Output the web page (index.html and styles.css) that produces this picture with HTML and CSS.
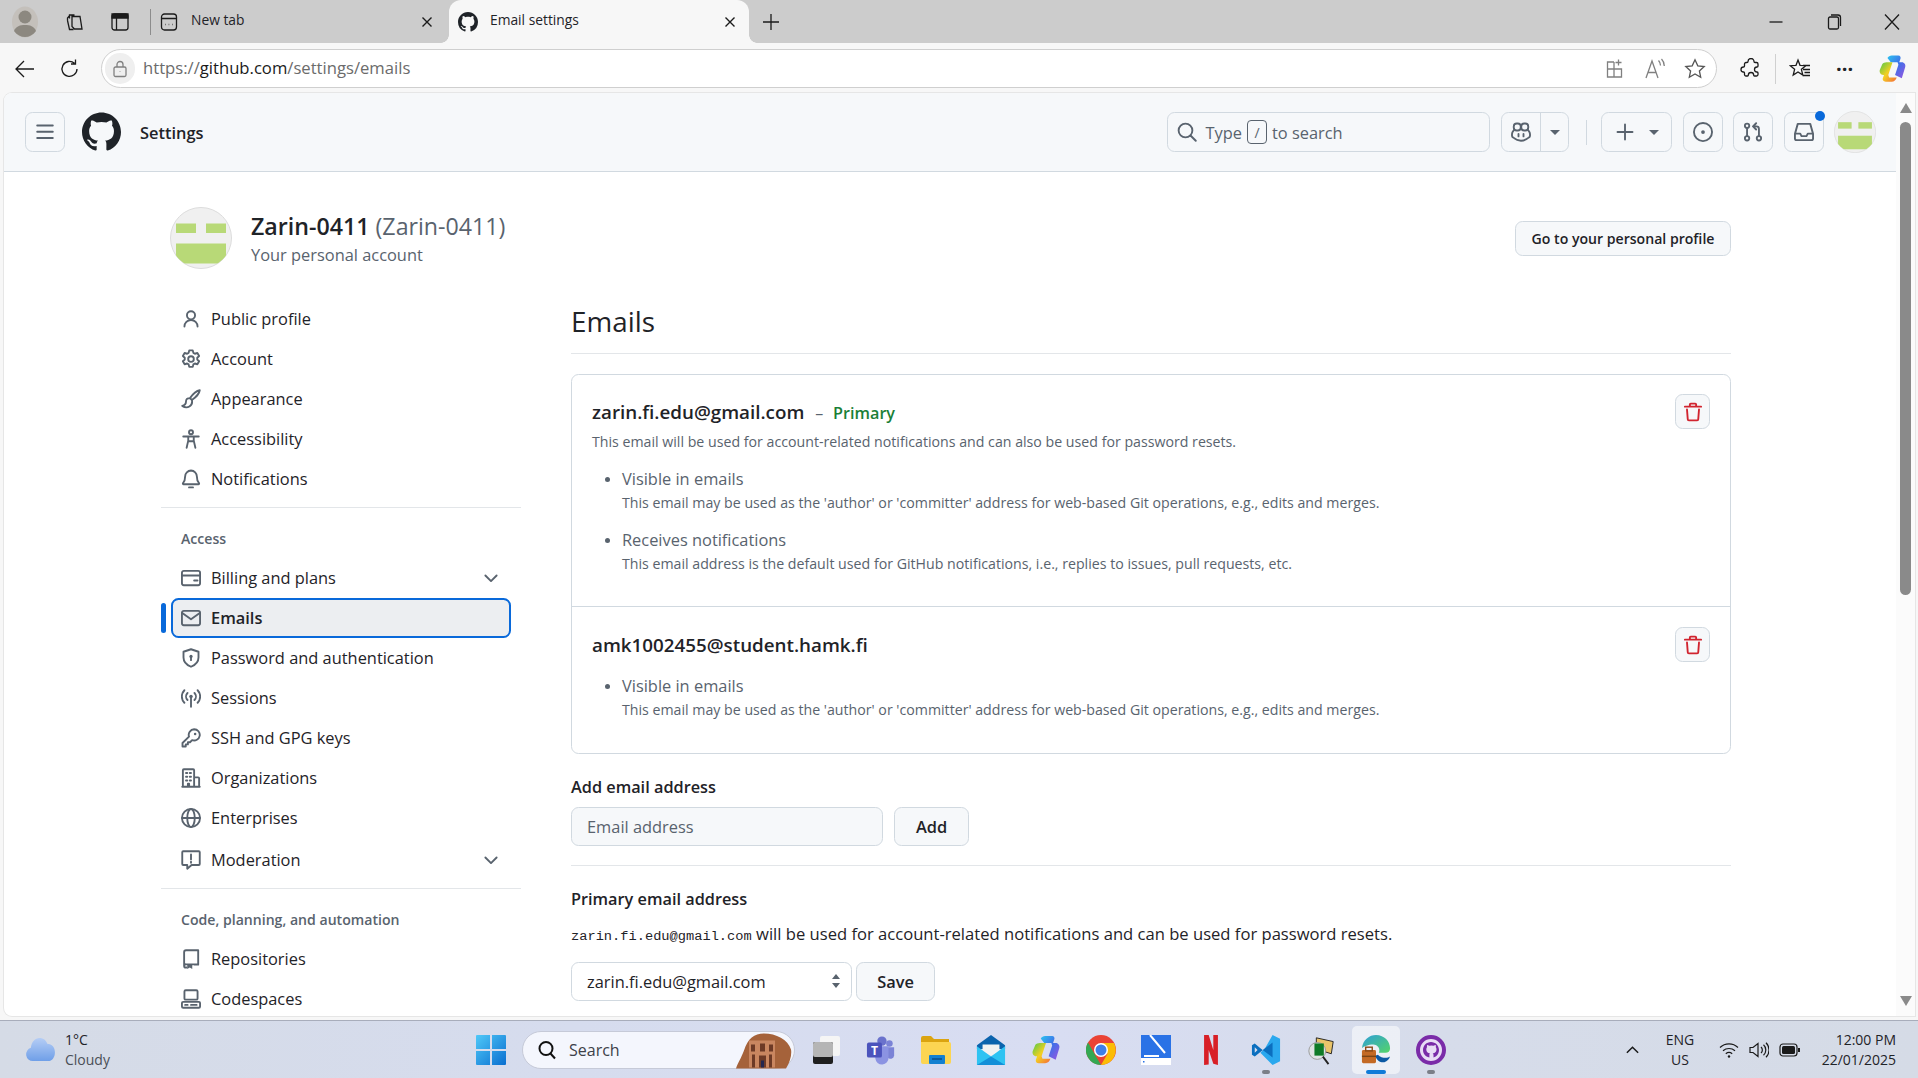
FILE: index.html
```html
<!DOCTYPE html>
<html lang="en">
<head>
  <meta charset="UTF-8">
  <meta name="viewport" content="width=device-width, initial-scale=1.0">
  <title>Email settings</title>
  <link rel="stylesheet" href="styles.css">
</head>
<body>
<svg class="sprite" width="0" height="0">
  <symbol id="i-github" viewBox="0 0 16 16"><path class="solid" d="M8 0c4.42 0 8 3.58 8 8a8.013 8.013 0 0 1-5.45 7.59c-.4.08-.55-.17-.55-.38 0-.27.01-1.13.01-2.2 0-.75-.25-1.23-.54-1.48 1.78-.2 3.65-.88 3.65-3.95 0-.88-.31-1.59-.82-2.15.08-.2.36-1.02-.08-2.12 0 0-.67-.22-2.2.82-.64-.18-1.32-.27-2-.27-.68 0-1.36.09-2 .27-1.53-1.03-2.2-.82-2.2-.82-.44 1.1-.16 1.92-.08 2.12-.51.56-.82 1.28-.82 2.15 0 3.06 1.86 3.75 3.64 3.95-.23.2-.44.55-.51 1.07-.46.21-1.61.55-2.33-.66-.15-.24-.6-.83-1.23-.82-.67.01-.27.38.01.53.34.19.73.9.82 1.13.16.45.68 1.31 2.69.94 0 .67.01 1.3.01 1.49 0 .21-.15.45-.55.38A7.995 7.995 0 0 1 0 8c0-4.42 3.58-8 8-8Z"/></symbol>
  <symbol id="i-bars" viewBox="0 0 16 16"><path d="M1.75 2.75h12.5M1.75 7.75h12.5M1.75 12.75h12.5"/></symbol>
  <symbol id="i-person" viewBox="0 0 16 16"><circle cx="8" cy="5" r="3.25"/><path d="M2.75 14a5.25 5.25 0 0 1 10.5 0"/></symbol>
  <symbol id="i-gear" viewBox="0 0 16 16"><circle cx="8" cy="8" r="2.25"/><path d="M6.6 1.1h2.8l.5 2 1.2.7 2-.6 1.4 2.4-1.5 1.4v1.4l1.5 1.4-1.4 2.4-2-.6-1.2.7-.5 2H6.6l-.5-2-1.2-.7-2 .6-1.4-2.4 1.5-1.4V7L1.5 5.6l1.4-2.4 2 .6 1.2-.7z"/></symbol>
  <symbol id="i-brush" viewBox="0 0 16 16"><path d="M15 1c-2 .3-5.5 3-7.8 6.3l1.5 1.5C12 6.5 14.7 3 15 1ZM7.2 7.3C5 7.3 4 8.5 4 10c0 1.700-1 3-3 3.500 1.700 1.200 4 1.500 5.700.5 1.700-1 2.500-3 2-5.200"/></symbol>
  <symbol id="i-access" viewBox="0 0 16 16"><circle cx="8" cy="2.6" r="1.6"/><path d="M1.800 6h12.400M5.800 6v3.300L4.500 15M10.200 6v3.300l1.300 5.700M5.800 9.800h4.400"/></symbol>
  <symbol id="i-bell" viewBox="0 0 16 16"><path d="M8 1.2A4.800 4.800 0 0 0 3.300 6c0 2.600-.6 4.200-1.700 5.300-.3.4 0 .9.400.9h12c.4 0 .7-.5.400-.9C13.300 10.200 12.700 8.600 12.700 6A4.800 4.800 0 0 0 8 1.200ZM6.400 14.700h3.200"/></symbol>
  <symbol id="i-card" viewBox="0 0 16 16"><rect x=".75" y="2.25" width="14.5" height="11.5" rx="1.5"/><path d="M1 6h14M10.500 10h2.700"/></symbol>
  <symbol id="i-mail" viewBox="0 0 16 16"><rect x=".75" y="2.25" width="14.5" height="11.5" rx="1.5"/><path d="M1 4l7 5 7-5"/></symbol>
  <symbol id="i-shield" viewBox="0 0 16 16"><path d="M8 1l6 2v4.500c0 3.500-2.500 6-6 7.500-3.500-1.500-6-4-6-7.500V3Z"/><circle class="solid" cx="8" cy="6.7" r="1.3"/><path d="M8 7v2.700"/></symbol>
  <symbol id="i-broadcast" viewBox="0 0 16 16"><circle class="solid" cx="8" cy="6.8" r="1.4"/><path d="M8 8v7M5.200 4a4 4 0 0 0 0 5.600M10.800 4a4 4 0 0 1 0 5.600M2.700 1.800a7.200 7.200 0 0 0 0 10M13.300 1.800a7.200 7.200 0 0 1 0 10"/></symbol>
  <symbol id="i-key" viewBox="0 0 16 16"><path d="M10.500 1a4.500 4.500 0 1 1-1.600 8.700L7.200 11.400H5.500v1.700H3.800v1.700H1.200v-2.800l5.200-5.100A4.500 4.500 0 0 1 10.500 1Z"/><circle class="solid" cx="11.3" cy="4.7" r="1"/></symbol>
  <symbol id="i-org" viewBox="0 0 16 16"><path d="M1 15h14M1.500 15V1.750c0-.5.300-.75.750-.75h7.500c.5 0 .75.300.75.750V15M10.500 7.500h3.250c.5 0 .75.300.75.750V15M4 4h1M7 4h1M4 7h1M7 7h1M4 10h1M7 10h1M5.500 15v-2.500h1V15"/></symbol>
  <symbol id="i-globe" viewBox="0 0 16 16"><circle cx="8" cy="8" r="7.25"/><ellipse cx="8" cy="8" rx="3" ry="7.25"/><path d="M1 8h14"/></symbol>
  <symbol id="i-report" viewBox="0 0 16 16"><path d="M1.750 1h12.500c.5 0 .75.300.75.750v9.500c0 .5-.300.750-.75.750H8.500L5 15v-3H1.750c-.5 0-.75-.300-.75-.75v-9.500c0-.5.300-.75.750-.75Z"/><path d="M8 3.500v4M8 9.300v.9"/></symbol>
  <symbol id="i-repo" viewBox="0 0 16 16"><path d="M2.500 13.500V2.500A1.500 1.500 0 0 1 4 1h9.750v11.500H11M2.500 13.500A1.500 1.500 0 0 1 4 12.250h9.750M2.500 13.500c0 .8.600 1.300 1.300 1.300H4.500"/><path class="solid" d="M5 12h4v4l-2-1.300L5 16Z"/></symbol>
  <symbol id="i-codespaces" viewBox="0 0 16 16"><rect x="2.75" y="1" width="10.5" height="7.5" rx="1"/><rect x=".75" y="10.25" width="14.5" height="4.75" rx="1"/><path d="M3.300 12.700h2M8 12.700h4.500"/></symbol>
  <symbol id="i-trash" viewBox="0 0 16 16"><path d="M1.500 3.700h13M5.500 3.700V2c0-.4.300-.7.700-.7h3.600c.4 0 .7.300.7.700v1.700M3.200 6l.6 7.800c0 .5.500.9.900.9h6.600c.4 0 .9-.4.900-.9l.6-7.800"/></symbol>
  <symbol id="i-chevron" viewBox="0 0 16 16"><path d="M3.500 6L8 10.500 12.500 6"/></symbol>
  <symbol id="i-search" viewBox="0 0 16 16"><circle cx="6.8" cy="6.8" r="5.5"/><path d="M10.800 10.800L15 15"/></symbol>
  <symbol id="i-copilot" viewBox="0 0 16 16"><rect x="2.2" y="1.2" width="5.6" height="5.6" rx="2.4"/><rect x="8.2" y="1.2" width="5.6" height="5.6" rx="2.4"/><path d="M2.300 6.500C1.500 7.500.8 8.500.8 9.500v1.500c0 .6.300 1 .8 1.300C3.500 13.800 6 15 8 15s4.500-1.200 6.400-2.700c.5-.3.800-.7.800-1.300V9.500c0-1-.7-2-1.500-3M6 9.500v2M10 9.500v2"/></symbol>
  <symbol id="i-plus" viewBox="0 0 16 16"><path d="M8 2v12M2 8h12"/></symbol>
  <symbol id="i-issue" viewBox="0 0 16 16"><circle cx="8" cy="8" r="7.25"/><circle class="solid" cx="8" cy="8" r="1.5"/></symbol>
  <symbol id="i-pr" viewBox="0 0 16 16"><circle cx="3.25" cy="3" r="1.75"/><circle cx="3.25" cy="13" r="1.75"/><circle cx="12.75" cy="13" r="1.75"/><path d="M3.250 4.750v6.500M12.750 11.250V5.500a2 2 0 0 0-2-2H8.500M10.500 1L8 3.500 10.500 6"/></symbol>
  <symbol id="i-inbox" viewBox="0 0 16 16"><path d="M3 1.500h10l2.250 8v3.700c0 .7-.6 1.300-1.300 1.300H2.050c-.7 0-1.300-.6-1.300-1.300V9.500ZM1 9.250h4l1 2h4l1-2h4"/></symbol>
</svg>

<div class="window">
  <div class="tabstrip">
    <svg class="profile" viewBox="0 0 28 32"><ellipse cx="14" cy="16" rx="13" ry="15.5" fill="#c4c0bb"/><circle cx="14" cy="11" r="6.5" fill="#8c8880"/><path d="M3 25c2-5 6-6 11-6s9 1 11 6c-3 4-7 6-11 6s-8-2-11-6Z" fill="#8c8880"/></svg>
    <svg class="chrome-ic collections" viewBox="0 0 20 20"><path d="M7 4.500h8l2 12.500h-7.500L7 14.500ZM4.500 6.500V3h5M2.500 8.500V6l1.800-2M2.500 8.500l2 9h4"/></svg>
    <svg class="chrome-ic vtabs" viewBox="0 0 20 20"><rect x="2" y="2" width="16" height="16" rx="2.5"/><path class="filled" d="M2 2h16v4H2Z"/><path d="M6.500 6v12"/></svg>
    <div class="tab-sep"></div>
    <div class="tab">
      <svg class="chrome-ic" viewBox="0 0 20 20"><rect x="2.5" y="2" width="15" height="16" rx="3"/><path d="M2.500 6.500h15M6 12.500h.5M9.700 12.500h.5M13.500 12.500h.5"/></svg>
      <span class="tab-title">New tab</span>
      <svg class="tab-close" viewBox="0 0 12 12"><path d="M1.500 1.500l9 9M10.500 1.500l-9 9"/></svg>
    </div>
    <div class="tab tab-active">
      <svg class="tab-logo"><use href="#i-github"/></svg>
      <span class="tab-title">Email settings</span>
      <svg class="tab-close" viewBox="0 0 12 12"><path d="M1.500 1.500l9 9M10.500 1.500l-9 9"/></svg>
    </div>
    <svg class="chrome-ic new-tab" viewBox="0 0 20 20"><path d="M10 2v16M2 10h16"/></svg>
    <div class="win-controls">
      <svg class="chrome-ic" viewBox="0 0 20 20"><path d="M3.500 10h13"/></svg>
      <svg class="chrome-ic" viewBox="0 0 20 20"><rect x="4.5" y="5" width="10" height="12" rx="1.5"/><path d="M7 3h7c1.500 0 2.500 1 2.500 2.500V14"/></svg>
      <svg class="chrome-ic" viewBox="0 0 20 20"><path d="M3 2.500l14 15M17 2.500l-14 15"/></svg>
    </div>
  </div>

  <div class="toolbar">
    <svg class="chrome-ic back" viewBox="0 0 22 22"><path d="M20 11H2.500M10 3l-8 8 8 8"/></svg>
    <svg class="chrome-ic reload" viewBox="0 0 22 22"><path d="M18 11a7.500 7.500 0 1 1-2.500-5.700M16.500 1.500v4.500H12"/></svg>
    <div class="addressbar">
      <span class="lock"><svg class="chrome-ic grey" viewBox="0 0 18 18"><rect x="3" y="7" width="12" height="9.5" rx="1.5"/><path d="M6 7V4.500a3 3 0 0 1 6 0V7M9 11.500v.5"/></svg></span>
      <span class="url">https://<b>github.com</b>/settings/emails</span>
      <div class="address-actions">
        <svg class="chrome-ic grey" viewBox="0 0 22 22"><path d="M10 4H3.500v15h14v-8h-14M10 4v15M14.500 1.500v6M11.500 4.500h6"/></svg>
        <svg class="chrome-ic grey" viewBox="0 0 22 22"><path d="M2 20l6-17 6 17M4.200 14.500h7.600M14.500 2.500c1.500 1.500 2 2.700 2 5M17.500 1c2 2 2.800 4 2.800 7"/></svg>
        <svg class="chrome-ic grey-dark" viewBox="0 0 22 22"><path d="M11 1.800l2.800 6 6.400.7-4.800 4.400 1.300 6.400L11 16l-5.700 3.300 1.300-6.400-4.800-4.400 6.400-.7Z"/></svg>
      </div>
    </div>
    <div class="toolbar-right">
      <svg class="chrome-ic" viewBox="0 0 22 22"><path d="M8 3.500a3 3 0 0 1 6 0c0 .5.500 1 1 1h1.500c.8 0 1.500.7 1.500 1.500v2c0 .5-.5 1-1 1a2.500 2.500 0 0 0 0 5c.5 0 1 .5 1 1v1.500c0 .8-.7 1.500-1.500 1.500H14.500c-.5 0-.8-.4-.8-.8a2.700 2.700 0 0 0-5.400 0c0 .4-.3.800-.8.800H6c-.8 0-1.500-.7-1.500-1.500V15c0-.5-.5-1-1-1a2.500 2.500 0 0 1 0-5c.5 0 1-.5 1-1V6c0-.8.700-1.500 1.500-1.500h1c.5 0 1-.5 1-1Z"/></svg>
      <div class="toolbar-sep"></div>
      <svg class="chrome-ic" viewBox="0 0 22 22"><path d="M9 2l2 5.300 5.800.4-4.400 3.600 1.400 5.700L9 14l-4.800 3 1.400-5.700L1.200 7.700 7 7.300ZM14 11.500h7M15.500 14.500h5.500M13.500 17.500h7.500M14 7.500h7"/></svg>
      <span class="more">···</span>
      <svg class="copilot-logo" viewBox="0 0 32 34">
        <defs>
          <linearGradient id="cp-a" x1="0" y1="0" x2="1" y2="1"><stop offset="0" stop-color="#2bc4f0"/><stop offset=".5" stop-color="#3f6fe8"/><stop offset="1" stop-color="#9b55e0"/></linearGradient>
          <linearGradient id="cp-b" x1="0" y1="0" x2="1" y2="1"><stop offset="0" stop-color="#4fc94a"/><stop offset=".5" stop-color="#f3d021"/><stop offset="1" stop-color="#f56a3a"/></linearGradient>
        </defs>
        <path fill="url(#cp-a)" d="M10 4c1-2 3-3 5-3h8c2 0 3 2 2.500 3.500L24 9h3c3 0 5 3 4 6l-4 13-8-4 4-12-1-3h-8Z"/>
        <path fill="url(#cp-b)" d="M9 9h7l-5 15 1 3h9c-1 3-3 5-6 5H8c-3 0-4-2-3.500-4L6 24H5c-3 0-5-3-4-6l3-7c1-1 3-2 5-2Z"/>
      </svg>
    </div>
  </div>

  <div class="viewport">
    <div class="page">
      <div class="page-scroll">
        <header class="gh-header">
          <button class="gh-btn"><svg class="ic"><use href="#i-bars"/></svg></button>
          <svg class="gh-logo"><use href="#i-github"/></svg>
          <span class="gh-context">Settings</span>
          <div class="gh-actions">
            <div class="gh-search">
              <svg class="ic"><use href="#i-search"/></svg>
              <span>Type</span><kbd class="slash">/</kbd><span>to search</span>
            </div>
            <div class="gh-split">
              <span class="split-main"><svg class="ic"><use href="#i-copilot"/></svg></span>
              <span class="split-caret"><i class="caret"></i></span>
            </div>
            <div class="gh-divider"></div>
            <div class="gh-btn gh-create"><svg class="ic"><use href="#i-plus"/></svg><i class="caret"></i></div>
            <button class="gh-btn"><svg class="ic"><use href="#i-issue"/></svg></button>
            <button class="gh-btn"><svg class="ic"><use href="#i-pr"/></svg></button>
            <button class="gh-btn gh-inbox"><svg class="ic"><use href="#i-inbox"/></svg><i class="dot"></i></button>
            <svg class="avatar avatar-small" viewBox="0 0 62 62"><use href="#identicon"/></svg>
          </div>
        </header>

        <div class="container">
          <div class="account-head">
            <svg class="avatar" viewBox="0 0 62 62">
              <g id="identicon">
                <clipPath id="av-clip"><circle cx="31" cy="31" r="30.5"/></clipPath>
                <circle cx="31" cy="31" r="30.5" fill="#f0f0f0" stroke="#dcdcdc"/>
                <g clip-path="url(#av-clip)" fill="#b8d977">
                  <rect x="6" y="16.5" width="20" height="9.5"/>
                  <rect x="36" y="16.5" width="20" height="9.5"/>
                  <rect x="6" y="36.5" width="50" height="20"/>
                </g>
              </g>
            </svg>
            <div class="account-text">
              <h1 class="account-name">Zarin-0411 <span>(Zarin-0411)</span></h1>
              <p class="account-sub">Your personal account</p>
            </div>
            <button class="btn btn-small">Go to your personal profile</button>
          </div>

          <div class="columns">
            <nav class="sidenav">
              <ul>
                <li><a><svg class="ic"><use href="#i-person"/></svg>Public profile</a></li>
                <li><a><svg class="ic"><use href="#i-gear"/></svg>Account</a></li>
                <li><a><svg class="ic"><use href="#i-brush"/></svg>Appearance</a></li>
                <li><a><svg class="ic"><use href="#i-access"/></svg>Accessibility</a></li>
                <li><a><svg class="ic"><use href="#i-bell"/></svg>Notifications</a></li>
              </ul>
              <div class="nav-divider"></div>
              <h2 class="nav-heading">Access</h2>
              <ul>
                <li><a><svg class="ic"><use href="#i-card"/></svg>Billing and plans<svg class="ic chev"><use href="#i-chevron"/></svg></a></li>
                <li class="current"><a><svg class="ic"><use href="#i-mail"/></svg>Emails</a></li>
                <li><a><svg class="ic"><use href="#i-shield"/></svg>Password and authentication</a></li>
                <li><a><svg class="ic"><use href="#i-broadcast"/></svg>Sessions</a></li>
                <li><a><svg class="ic"><use href="#i-key"/></svg>SSH and GPG keys</a></li>
                <li><a><svg class="ic"><use href="#i-org"/></svg>Organizations</a></li>
                <li><a><svg class="ic"><use href="#i-globe"/></svg>Enterprises</a></li>
                <li class="moderation"><a><svg class="ic"><use href="#i-report"/></svg>Moderation<svg class="ic chev"><use href="#i-chevron"/></svg></a></li>
              </ul>
              <div class="nav-divider"></div>
              <h2 class="nav-heading">Code, planning, and automation</h2>
              <ul>
                <li><a><svg class="ic"><use href="#i-repo"/></svg>Repositories</a></li>
                <li><a><svg class="ic"><use href="#i-codespaces"/></svg>Codespaces</a></li>
              </ul>
            </nav>

            <main class="main">
              <h2 class="page-title">Emails</h2>
              <div class="email-box">
                <div class="email-item">
                  <div class="email-body">
                    <div class="email-name">zarin.fi.edu@gmail.com <span class="dash">–</span> <span class="primary">Primary</span></div>
                    <p class="note note-first">This email will be used for account-related notifications and can also be used for password resets.</p>
                    <ul class="email-props">
                      <li>Visible in emails<p class="note">This email may be used as the 'author' or 'committer' address for web-based Git operations, e.g., edits and merges.</p></li>
                      <li>Receives notifications<p class="note">This email address is the default used for GitHub notifications, i.e., replies to issues, pull requests, etc.</p></li>
                    </ul>
                  </div>
                  <button class="btn-trash"><svg class="ic"><use href="#i-trash"/></svg></button>
                </div>
                <div class="email-item email-second">
                  <div class="email-body">
                    <div class="email-name">amk1002455@student.hamk.fi</div>
                    <ul class="email-props">
                      <li>Visible in emails<p class="note">This email may be used as the 'author' or 'committer' address for web-based Git operations, e.g., edits and merges.</p></li>
                    </ul>
                  </div>
                  <button class="btn-trash"><svg class="ic"><use href="#i-trash"/></svg></button>
                </div>
              </div>

              <h3 class="form-label add-label">Add email address</h3>
              <div class="form-row">
                <input class="input" type="text" placeholder="Email address">
                <button class="btn btn-add">Add</button>
              </div>
              <div class="form-divider"></div>
              <h3 class="form-label primary-label">Primary email address</h3>
              <p class="primary-text"><code>zarin.fi.edu@gmail.com</code> will be used for account-related notifications and can be used for password resets.</p>
              <div class="form-row form-row-select">
                <div class="select-wrap">
                  <select class="select"><option>zarin.fi.edu@gmail.com</option></select>
                  <svg class="select-arrows" viewBox="0 0 10 16"><path d="M5 1l4 5H1ZM5 15l4-5H1Z"/></svg>
                </div>
                <button class="btn btn-save">Save</button>
              </div>
            </main>
          </div>
        </div>
      </div>
      <div class="scrollbar">
        <i class="arrow arrow-up"></i>
        <div class="thumb"></div>
        <i class="arrow arrow-down"></i>
      </div>
    </div>
  </div>

  <div class="taskbar">
    <div class="weather">
      <svg class="weather-ic" viewBox="0 0 32 26"><defs><linearGradient id="cloud" x1="0" y1="0" x2="0" y2="1"><stop offset="0" stop-color="#b5cdf5"/><stop offset="1" stop-color="#6f9fe8"/></linearGradient></defs><path fill="url(#cloud)" d="M8 25a7 7 0 0 1-2-13.700C6.500 5 10.500 1 15 1c4 0 7 2.500 8 6 5 0 8 4 8 9 0 5-3 9-7 9Z"/></svg>
      <div class="weather-text"><span>1°C</span><span class="weather-sub">Cloudy</span></div>
    </div>
    <div class="tb-cell">
      <svg class="tb-ic" viewBox="0 0 30 30"><defs><linearGradient id="win" x1="0" y1="0" x2="1" y2="1"><stop offset="0" stop-color="#4fc8f8"/><stop offset="1" stop-color="#0a6fd0"/></linearGradient></defs><path fill="url(#win)" d="M0 1q0-1 1-1h13v14H0ZM16 0h13q1 0 1 1v13H16ZM0 16h14v14H1q-1 0-1-1ZM16 16h14v13q0 1-1 1H16Z"/></svg>
    </div>
    <div class="tb-search">
      <svg class="tb-search-ic" viewBox="0 0 20 20"><circle cx="9" cy="8.5" r="6.5"/><path d="M13.500 13.500l4.500 5"/></svg>
      <span>Search</span>
      <svg class="petra" viewBox="0 0 58 36"><path fill="#a5623a" d="M2 36c2-6 5-10 8-18C14 6 20 1 30 1c12 0 24 6 27 16 1 5-1 13-5 19Z"/><rect x="15" y="8" width="26" height="27" fill="#c98660"/><path fill="#6d3a26" d="M17 12h4v7h-4ZM26 11h5v8h-5ZM35 12h4v7h-4ZM18 22h3v13h-3ZM25 23h7v12h-7ZM35 22h3v13h-3Z"/><rect x="27" y="28" width="3" height="7" fill="#23264f"/></svg>
    </div>
    <div class="tb-cell">
      <svg class="tb-ic" viewBox="0 0 30 30"><rect x="9" y="1" width="20" height="20" rx="2" fill="#f5f5f5"/><rect x="2" y="7" width="20" height="22" rx="2" fill="#1f1f1f"/><rect x="2" y="7" width="20" height="15" rx="2" fill="#b5b5b5"/></svg>
    </div>
    <div class="tb-cell">
      <svg class="tb-ic" viewBox="0 0 32 32"><circle cx="25" cy="9" r="3.5" fill="#7b83d6"/><path fill="#7b83d6" d="M21 13h9v9a4 4 0 0 1-7 2Z"/><circle cx="17" cy="6.5" r="5" fill="#6a72cc"/><path fill="#8b93e2" d="M9 12h15v12a7 7 0 0 1-14 1Z"/><rect x="1" y="8" width="16" height="16" rx="2" fill="#4b53bc"/><text class="teams-t" x="9" y="21" text-anchor="middle">T</text></svg>
    </div>
    <div class="tb-cell">
      <svg class="tb-ic" viewBox="0 0 30 30"><path fill="#dba410" d="M0 3q0-2 2-2h8l3 3h15v6H0Z"/><path fill="#fcd552" d="M0 7h28q2 0 2 2v18q0 2-2 2H2q-2 0-2-2Z"/><rect x="8" y="20" width="16" height="9" rx="1" fill="#1380d0"/><rect x="11" y="23" width="10" height="2" fill="#0b5a9c"/></svg>
    </div>
    <div class="tb-cell">
      <svg class="tb-ic" viewBox="0 0 30 32"><path fill="#0b63ad" d="M15 0L30 11v4H0v-4Z"/><path fill="#f2f2f2" d="M6 10h18v8l-9 4-9-4Z"/><path fill="#2fc3f2" d="M0 12l15 11 15-11v20H0Z"/><path fill="#138fd8" d="M0 32l15-9 15 9Z"/></svg>
    </div>
    <div class="tb-cell">
      <svg class="tb-ic" viewBox="0 0 32 34"><path fill="url(#cp-a)" d="M10 4c1-2 3-3 5-3h8c2 0 3 2 2.500 3.500L24 9h3c3 0 5 3 4 6l-4 13-8-4 4-12-1-3h-8Z"/><path fill="url(#cp-b)" d="M9 9h7l-5 15 1 3h9c-1 3-3 5-6 5H8c-3 0-4-2-3.500-4L6 24H5c-3 0-5-3-4-6l3-7c1-1 3-2 5-2Z"/></svg>
    </div>
    <div class="tb-cell">
      <svg class="tb-ic" viewBox="0 0 30 30"><circle cx="15" cy="15" r="15" fill="#ea4335"/><path fill="#34a853" d="M2 7.500l7.500 13L15 30a15 15 0 0 1-13-22.500Z"/><path fill="#fbbc05" d="M15 8h13a15 15 0 0 1-13 22l6.500-11.200Z"/><circle cx="15" cy="15" r="7" fill="#fff"/><circle cx="15" cy="15" r="5.5" fill="#3f7fe8"/></svg>
    </div>
    <div class="tb-cell">
      <svg class="tb-ic" viewBox="0 0 30 30"><rect width="30" height="30" fill="#2a72e6"/><path d="M9 0l15 18M3 21h15" stroke="#fff" stroke-width="2" fill="none"/><rect y="23" width="30" height="7" fill="#fff"/><rect x="2" y="26" width="1.5" height="1.5" fill="#2a72e6"/></svg>
    </div>
    <div class="tb-cell">
      <svg class="tb-ic tb-netflix" viewBox="0 0 12 26"><path fill="#d81f26" d="M0 0h4l4 13V0h4v26l-4-1-4-12v12.500L0 26Z"/></svg>
    </div>
    <div class="tb-cell tb-pinned">
      <svg class="tb-ic" viewBox="0 0 30 32"><path fill="#2aa8ee" d="M22 0l8 4v24l-8 4-13-13 5-5Z"/><path fill="#0b6fbf" d="M22 8v16L9 14 3 9 0 11v10l3 2 6-5 5-4ZM3 13l3 3-3 3Z"/></svg>
    </div>
    <div class="tb-cell">
      <svg class="tb-ic" viewBox="0 0 32 32"><path fill="#e9c46a" stroke="#222" stroke-width="1" d="M11 3l18 4-2 13-16-5Z"/><circle cx="12" cy="17" r="9" fill="#dfe4e4" stroke="#999"/><path fill="#0d7a26" d="M9 9h10v13H9Z"/><path stroke="#222" stroke-width="2" d="M18 23l6 8"/></svg>
    </div>
    <div class="tb-cell tb-active">
      <svg class="tb-ic" viewBox="0 0 30 32"><defs><linearGradient id="edge" x1="0" y1="0" x2="1" y2="1"><stop offset="0" stop-color="#2e9fd8"/><stop offset="1" stop-color="#54d468"/></linearGradient></defs><path fill="url(#edge)" d="M0 14C1 5 8 0 15 0c9 0 15 7 15 14 0 3-2 5-5 5h-7c2-4-1-9-6-9-5 0-10 2-12 4Z"/><path fill="#0c59a4" d="M14 22c2 5 6 8 10 7 3-1 5-3 6-6-3 2-9 2-13-2Z"/><rect y="16" width="15" height="14" rx="1.5" fill="#c46a24"/><rect x="4" y="13" width="7" height="4" fill="none" stroke="#8a4a18" stroke-width="1.5"/><rect y="22" width="15" height="1.5" fill="#7a4415"/></svg>
    </div>
    <div class="tb-cell tb-pinned">
      <svg class="tb-ic" viewBox="0 0 30 30"><circle cx="15" cy="15" r="13" fill="#e8dcf5" stroke="#7a2ba8" stroke-width="4"/><svg x="7" y="7" width="16" height="16" viewBox="0 0 16 16"><path fill="#7a2ba8" d="M8 0c4.420 0 8 3.580 8 8 0 3.500-2.300 6.500-5.500 7.600V13c0-1-.4-1.500-.8-1.800 2-.2 3.800-1 3.800-4 0-.9-.3-1.600-.8-2.200.1-.2.400-1-.1-2.100 0 0-.7-.2-2.200.8a7 7 0 0 0-4 0c-1.500-1-2.200-.8-2.200-.8-.5 1.100-.2 1.900-.1 2.100-.5.600-.8 1.300-.8 2.200 0 3 1.800 3.800 3.700 4-.3.300-.5.700-.6 1.300V15.600C2.300 14.500 0 11.500 0 8c0-4.420 3.580-8 8-8Z"/></svg></svg>
    </div>
    <div class="tray">
      <svg class="tray-ic tray-chev" viewBox="0 0 16 10"><path d="M2 8l6-6 6 6"/></svg>
      <div class="tray-lang"><span>ENG</span><span>US</span></div>
      <svg class="tray-ic" viewBox="0 0 20 18"><path d="M1 6.500a13 13 0 0 1 18 0M4 9.800a9 9 0 0 1 12 0M6.800 12.800a5 5 0 0 1 6.400 0"/><circle class="tray-dot" cx="10" cy="15.5" r="1.2"/></svg>
      <svg class="tray-ic" viewBox="0 0 20 18"><path d="M1 6.500v5h3l5 4V2.500l-5 4ZM12 6a4 4 0 0 1 0 6M14.500 3.800a7 7 0 0 1 0 10.400M17 1.800a10 10 0 0 1 0 14.400"/></svg>
      <svg class="tray-ic tray-batt" viewBox="0 0 22 16"><rect x="1" y="2" width="17" height="12" rx="3"/><rect class="tray-dot" x="3" y="4" width="13" height="8" rx="1.5"/><path class="tray-dot" d="M19 6h2v4h-2Z"/></svg>
      <div class="tray-clock"><span>12:00 PM</span><span>22/01/2025</span></div>
    </div>
  </div>
</div>
</body>
</html>
```

FILE: styles.css
```css
*{
  margin: 0;
  padding: 0;
  box-sizing: border-box;
}
html,body{
  width: 100%;
  height: 100%;
  overflow: hidden;
}
body{
  font-family: "Open Sans", "Noto Sans", sans-serif;
  font-size: 16.4px;
  color: #1f2328;
  background: #f7f7f7;
}
ul,li{
  list-style: none;
}
button,input,select{
  font-family: inherit;
  color: inherit;
}
.sprite{
  position: absolute;
}
.solid{
  fill: currentColor;
  stroke: none;
}
.window{
  display: flex;
  flex-direction: column;
  height: 1078px;
  width: 1918px;
}

/* browser tabs */
.tabstrip{
  display: flex;
  align-items: center;
  height: 43px;
  background: #ccc;
  flex: none;
}
.chrome-ic{
  width: 20px;
  height: 20px;
  fill: none;
  stroke: #1b1b1b;
  stroke-width: 1.3;
  flex: none;
}
.chrome-ic .filled{
  fill: #1b1b1b;
}
.chrome-ic.grey{
  stroke: #808080;
}
.chrome-ic.grey-dark{
  stroke: #555;
}
.profile{
  width: 28px;
  height: 32px;
  margin-left: 11px;
}
.collections{
  margin-left: 26px;
}
.vtabs{
  margin-left: 25px;
}
.tab-sep{
  width: 1px;
  height: 26px;
  background: #8c8c8c;
  margin-left: 20px;
}
.tab{
  display: flex;
  align-items: center;
  height: 43px;
  padding: 0 12px 0 8px;
  width: 294px;
}
.tab-title{
  font-size: 13.8px;
  margin-left: 12px;
  padding-bottom: 4px;
  flex: 1;
}
.tab-close{
  width: 12px;
  height: 12px;
  fill: none;
  stroke: #1b1b1b;
  stroke-width: 1.4;
}
.tab-active{
  position: relative;
  width: 300px;
  margin-left: 4px;
  padding: 0 13px 0 9px;
  background: #f7f7f7;
  border-radius: 12px 12px 0 0;
}
.tab-active::before,
.tab-active::after{
  content: "";
  position: absolute;
  bottom: 0;
  width: 8px;
  height: 8px;
}
.tab-active::before{
  left: -8px;
  background: radial-gradient(circle at 0 0, #ccc 7.5px, #f7f7f7 8px);
}
.tab-active::after{
  right: -8px;
  background: radial-gradient(circle at 100% 0, #ccc 7.5px, #f7f7f7 8px);
}
.tab-logo{
  width: 20px;
  height: 20px;
  color: #1f2328;
}
.new-tab{
  margin-left: 12px;
}
.win-controls{
  display: flex;
  margin-left: auto;
  margin-right: 16px;
  gap: 38px;
}

/* address bar row */
.toolbar{
  display: flex;
  align-items: center;
  height: 50px;
  background: #f7f7f7;
  flex: none;
  padding-top: 1px;
}
.back{
  width: 22px;
  height: 22px;
  margin-left: 14px;
}
.reload{
  width: 22px;
  height: 22px;
  margin-left: 23px;
}
.addressbar{
  display: flex;
  align-items: center;
  width: 1616px;
  height: 39px;
  margin-left: 20px;
  background: #fff;
  border: 1px solid #cfcfcf;
  border-radius: 20px;
}
.lock{
  display: flex;
  align-items: center;
  justify-content: center;
  width: 30px;
  height: 31px;
  margin-left: 3px;
  background: #efefef;
  border-radius: 15px;
}
.lock .chrome-ic{
  width: 18px;
  height: 18px;
}
.url{
  margin-left: 8px;
  padding-bottom: 2px;
  color: #6b6b6b;
  font-size: 16.65px;
}
.url b{
  color: #1a1a1a;
  font-weight: 400;
}
.address-actions{
  display: flex;
  margin-left: auto;
  margin-right: 10px;
  gap: 18px;
}
.address-actions .chrome-ic{
  width: 22px;
  height: 22px;
}
.toolbar-right{
  display: flex;
  align-items: center;
  margin-left: 23px;
}
.toolbar-right .chrome-ic{
  width: 22px;
  height: 22px;
}
.toolbar-sep{
  width: 1px;
  height: 30px;
  background: #d0d0d0;
  margin: 0 13px;
}
.more{
  margin-left: 25px;
  font-size: 20px;
  font-weight: 700;
  line-height: 1;
}
.copilot-logo{
  width: 27px;
  height: 30px;
  margin-left: 26px;
}

/* viewport */
.viewport{
  flex: 1;
  min-height: 0;
  padding: 0 3px 4px 4px;
  background: #f7f7f7;
  border-bottom: 1px solid #a8adbb;
}
.page{
  display: flex;
  height: 100%;
  background: #fff;
  border-radius: 8px 0 0 8px;
  overflow: hidden;
  box-shadow: 0 0 0 1px #e6e6e6;
}
.page-scroll{
  flex: 1;
  min-width: 0;
  overflow: hidden;
}
.scrollbar{
  display: flex;
  flex-direction: column;
  align-items: center;
  width: 19px;
  flex: none;
  background: #fbfbfb;
}
.arrow{
  width: 0;
  height: 0;
  border-left: 6px solid transparent;
  border-right: 6px solid transparent;
}
.arrow-up{
  border-bottom: 10px solid #8a8a8a;
  margin-top: 10px;
}
.arrow-down{
  border-top: 10px solid #8a8a8a;
  margin-top: auto;
  margin-bottom: 10px;
}
.thumb{
  width: 11px;
  height: 473px;
  margin-top: 9px;
  background: #8a8a8a;
  border-radius: 6px;
}

/* github header */
.gh-header{
  display: flex;
  align-items: center;
  height: 79px;
  padding: 0 20px 0 21px;
  background: #f6f8fa;
  border-bottom: 1px solid #d1d9e0;
}
.ic{
  width: 20px;
  height: 20px;
  flex: none;
  color: #59636e;
  fill: none;
  stroke: currentColor;
  stroke-width: 1.5;
  stroke-linecap: round;
  stroke-linejoin: round;
}
.gh-btn{
  display: flex;
  align-items: center;
  justify-content: center;
  width: 40px;
  height: 40px;
  background: transparent;
  border: 1px solid #d1d9e0;
  border-radius: 7.5px;
  flex: none;
}
.gh-logo{
  width: 39px;
  height: 40px;
  margin-left: 17px;
  color: #1f2328;
}
.gh-context{
  margin-left: 19px;
  font-weight: 600;
}
.gh-actions{
  display: flex;
  align-items: center;
  margin-left: auto;
  gap: 10.5px;
}
.gh-search{
  display: flex;
  align-items: center;
  width: 323px;
  height: 40px;
  margin-right: 1px;
  padding-left: 9px;
  border: 1px solid #d1d9e0;
  border-radius: 7.5px;
  color: #59636e;
}
.gh-search span:first-of-type{
  margin-left: 9px;
}
.slash{
  display: flex;
  align-items: center;
  justify-content: center;
  width: 20px;
  height: 24px;
  margin: 0 5px;
  font: inherit;
  font-size: 14px;
  border: 1px solid #59636e;
  border-radius: 4px;
}
.gh-split{
  display: flex;
  width: 68px;
  height: 40px;
  border: 1px solid #d1d9e0;
  border-radius: 7.5px;
}
.split-main{
  display: flex;
  align-items: center;
  justify-content: center;
  width: 39px;
  border-right: 1px solid #d1d9e0;
}
.split-caret{
  display: flex;
  align-items: center;
  justify-content: center;
  flex: 1;
}
.caret{
  width: 0;
  height: 0;
  border-left: 5px solid transparent;
  border-right: 5px solid transparent;
  border-top: 5px solid #59636e;
}
.gh-divider{
  width: 1px;
  height: 25px;
  margin: 0 4px 0 6px;
  background: #d1d9e0;
}
.gh-create{
  width: 71px;
  gap: 14px;
}
.gh-inbox{
  position: relative;
}
.dot{
  position: absolute;
  top: -2px;
  right: -2px;
  width: 10px;
  height: 10px;
  background: #0969da;
  border-radius: 50%;
}
.avatar{
  width: 62px;
  height: 62px;
  flex: none;
}
.avatar-small{
  width: 42px;
  height: 42px;
}

/* account heading */
.container{
  width: 1570px;
  margin-left: 157px;
  padding-top: 35px;
}
.account-head{
  display: flex;
  align-items: center;
  height: 62px;
  padding-left: 9px;
}
.account-text{
  margin-left: 19px;
  padding-top: 2px;
}
.account-name{
  font-size: 23.2px;
  font-weight: 600;
  line-height: 31px;
}
.account-name span{
  font-weight: 500;
  color: #59636e;
}
.account-sub{
  color: #59636e;
  line-height: 24px;
  margin-top: 1px;
}
.btn{
  background: #f6f8fa;
  border: 1px solid #d1d9e0;
  border-radius: 7.5px;
  font-weight: 600;
}
.btn-small{
  width: 216px;
  height: 35px;
  margin-left: auto;
  font-size: 14.1px;
}
.columns{
  display: grid;
  grid-template-columns: 360px 1160px;
  column-gap: 50px;
  margin-top: 30px;
}

/* left menu */
.sidenav li{
  height: 40px;
}
.sidenav a{
  display: flex;
  align-items: center;
  gap: 10px;
  height: 40px;
  padding: 0 20px 2px 20px;
  color: #1f2328;
}
.sidenav a .ic{
  margin-top: 2px;
}
.chev{
  margin-left: auto;
}
.sidenav .current{
  position: relative;
}
.sidenav .current::before{
  content: "";
  position: absolute;
  left: 0;
  top: 5px;
  width: 5px;
  height: 30px;
  background: #0969da;
  border-radius: 3px;
}
.sidenav .current a{
  margin-left: 10px;
  width: 340px;
  padding-left: 8px;
  background: #eceef1;
  border: 2px solid #0969da;
  border-radius: 7.5px;
  font-weight: 600;
}
.moderation{
  margin-top: 2px;
}
.nav-divider{
  height: 1px;
  margin-top: 8px;
  background: #e3e6e9;
}
.nav-heading{
  margin: 19px 0 7px 20px;
  font-size: 14.1px;
  font-weight: 600;
  line-height: 24px;
  color: #59636e;
}

/* main column */
.page-title{
  height: 55px;
  padding-bottom: 10px;
  font-size: 27.8px;
  font-weight: 400;
  line-height: 44px;
  border-bottom: 1px solid #e3e6e9;
}
.email-box{
  margin-top: 20px;
  border: 1px solid #d1d9e0;
  border-radius: 7.5px;
}
.email-item{
  display: flex;
  justify-content: space-between;
  align-items: flex-start;
  padding: 19px 20px 32px 20px;
}
.email-second{
  padding: 20px 20px 33px 20px;
  border-top: 1px solid #d1d9e0;
}
.email-name{
  margin-top: 5px;
  font-size: 18.8px;
  font-weight: 600;
  line-height: 26px;
}
.dash{
  margin: 0 5px 0 6px;
  font-size: 16px;
  font-weight: 400;
  color: #59636e;
}
.primary{
  font-size: 16.2px;
  font-weight: 600;
  color: #1a7f37;
}
.note{
  font-size: 14.18px;
  line-height: 20px;
  color: #59636e;
}
.note-first{
  margin-top: 6px;
}
.email-props{
  margin-top: 15px;
  padding-left: 30px;
}
.email-second .email-props{
  margin-top: 16px;
}
.email-props li{
  position: relative;
  line-height: 24px;
  color: #59636e;
  margin-bottom: 15px;
}
.email-props li:last-child{
  margin-bottom: 0;
}
.email-props li::before{
  content: "";
  position: absolute;
  left: -17px;
  top: 10px;
  width: 5px;
  height: 5px;
  background: #59636e;
  border-radius: 50%;
}
.email-props .note{
  margin-top: 2px;
}
.btn-trash{
  display: flex;
  align-items: center;
  justify-content: center;
  width: 35px;
  height: 35px;
  flex: none;
  background: #f6f8fa;
  border: 1px solid #d1d9e0;
  border-radius: 7.5px;
}
.btn-trash .ic{
  color: #d1242f;
}
.form-label{
  font-size: 16.3px;
  font-weight: 600;
  line-height: 24px;
}
.add-label{
  margin-top: 21px;
}
.form-row{
  display: flex;
  margin-top: 8px;
}
.input{
  width: 312px;
  height: 39px;
  padding: 0 15px;
  font-size: 16.4px;
  background: #f6f8fa;
  border: 1px solid #d1d9e0;
  border-radius: 7.5px;
}
.input::placeholder{
  color: #59636e;
  opacity: 1;
}
.btn-add{
  width: 75px;
  height: 39px;
  margin-left: 11px;
  font-size: 16.4px;
}
.form-divider{
  height: 1px;
  margin-top: 19px;
  background: #e3e6e9;
}
.primary-label{
  margin-top: 21px;
}
.primary-text{
  margin-top: 11px;
  line-height: 24px;
  font-size: 16.6px;
}
.primary-text code{
  font-family: "Liberation Mono", monospace;
  font-size: 13.7px;
}
.form-row-select{
  margin-top: 13px;
}
.select-wrap{
  position: relative;
  width: 281px;
  height: 39px;
}
.select{
  width: 100%;
  height: 100%;
  padding: 0 15px;
  font-size: 16.4px;
  background: #fff;
  border: 1px solid #d1d9e0;
  border-radius: 7.5px;
  appearance: none;
  -webkit-appearance: none;
}
.select-arrows{
  position: absolute;
  right: 11px;
  top: 11px;
  width: 10px;
  height: 16px;
  fill: #59636e;
}
.btn-save{
  width: 79px;
  height: 39px;
  margin-left: 4px;
  font-size: 16.4px;
}

/* windows taskbar */
.taskbar{
  display: flex;
  align-items: center;
  height: 57px;
  flex: none;
  background: linear-gradient(90deg, #d5dbe6 0%, #d6dcee 30%, #d8ddf2 55%, #d6dcea 75%, #d5dbe6 100%);
}
.weather{
  display: flex;
  align-items: center;
  width: 463px;
  padding-left: 25px;
}
.weather-ic{
  width: 31px;
  height: 25px;
}
.weather-text{
  display: flex;
  flex-direction: column;
  margin-left: 9px;
  font-size: 14px;
  line-height: 20px;
}
.weather-sub{
  color: #4a4f57;
}
.tb-cell{
  display: flex;
  align-items: center;
  justify-content: center;
  position: relative;
  width: 55px;
  height: 48px;
  flex: none;
}
.tb-ic{
  width: 30px;
  height: 30px;
}
.tb-netflix{
  width: 14px;
}
.teams-t{
  font-family: "Open Sans", sans-serif;
  font-size: 13px;
  font-weight: 700;
  fill: #fff;
}
.tb-pinned::after,
.tb-active::after{
  content: "";
  position: absolute;
  bottom: 0;
  left: 50%;
  width: 8px;
  height: 4px;
  margin-left: -4px;
  background: #7b7f88;
  border-radius: 2px;
}
.tb-active{
  width: 48px;
  margin: 0 3.5px;
  background: rgba(255,255,255,.55);
  border-radius: 5px;
}
.tb-active::after{
  width: 20px;
  margin-left: -10px;
  background: #0f7bd8;
}
.tb-search{
  display: flex;
  align-items: center;
  position: relative;
  width: 273px;
  height: 38px;
  margin: 0 3px 0 4px;
  padding-left: 14px;
  background: #f4f6fd;
  border: 1px solid #c6cad8;
  border-radius: 19px;
  font-size: 16px;
  color: #3d4149;
  flex: none;
}
.tb-search-ic{
  width: 20px;
  height: 20px;
  fill: none;
  stroke: #111;
  stroke-width: 2;
}
.tb-search span{
  margin-left: 12px;
}
.petra{
  position: absolute;
  right: 2px;
  top: 0;
  width: 58px;
  height: 37px;
}
.tray{
  display: flex;
  align-items: center;
  margin-left: auto;
  padding-right: 22px;
}
.tray-ic{
  width: 20px;
  height: 18px;
  fill: none;
  stroke: #1a1a1a;
  stroke-width: 1.2;
  margin-left: 10px;
}
.tray-dot{
  fill: #1a1a1a;
  stroke: none;
}
.tray-chev{
  width: 15px;
  height: 10px;
  margin-left: 0;
  stroke-width: 1.6;
}
.tray-lang{
  display: flex;
  flex-direction: column;
  align-items: center;
  width: 30px;
  margin: 0 24px 0 25px;
  font-size: 14px;
  line-height: 20px;
}
.tray-lang + .tray-ic{
  margin-left: 0;
}
.tray-batt{
  width: 22px;
  height: 16px;
}
.tray-clock{
  display: flex;
  flex-direction: column;
  align-items: flex-end;
  width: 85px;
  margin-left: 10px;
  font-size: 14px;
  line-height: 20px;
}
```
